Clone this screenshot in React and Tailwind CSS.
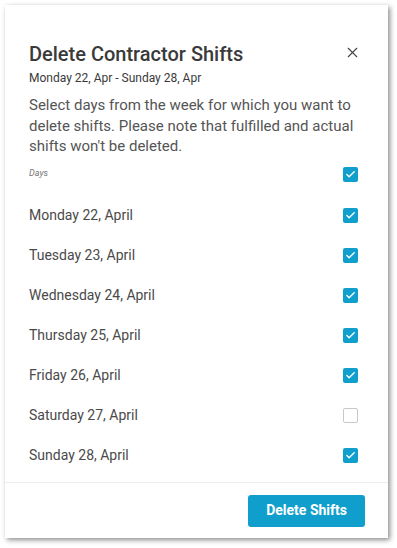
import { X, Check } from "lucide-react";

const days = [
  { label: "Monday 22, April", checked: true },
  { label: "Tuesday 23, April", checked: true },
  { label: "Wednesday 24, April", checked: true },
  { label: "Thursday 25, April", checked: true },
  { label: "Friday 26, April", checked: true },
  { label: "Saturday 27, April", checked: false },
  { label: "Sunday 28, April", checked: true },
];

function Box({ checked }) {
  return checked ? (
    <span className="flex h-[15px] w-[15px] items-center justify-center rounded-[2px] bg-[#109fcd]">
      <Check size={11} strokeWidth={3} className="text-white" />
    </span>
  ) : (
    <span className="h-[15px] w-[15px] rounded-[2px] border border-[#c8c8c8] bg-white" />
  );
}

export default function App() {
  return (
    <div className="min-h-screen bg-white pl-[5px] pt-[5px] font-['Roboto',sans-serif]">
      <div className="w-[383px] bg-white shadow-[2px_2px_5px_rgba(0,0,0,0.45)]">
        <div className="px-6 pt-[35px]">
          <div className="flex items-start justify-between">
            <h1 className="text-[20px] leading-[28px] font-medium text-[#3a3a3a]">
              Delete Contractor Shifts
            </h1>
            <button className="mr-[3px] mt-[4px] text-[#444]">
              <X size={17} strokeWidth={1.6} />
            </button>
          </div>
          <p className="mt-[1px] text-[12px] leading-[18px] text-[#3a3a3a]">
            Monday 22, Apr - Sunday 28, Apr
          </p>
          <p className="mt-[8px] text-[15px] leading-[20.5px] text-[#555]">
            Select days from the week for which you want to delete shifts. Please note
            that fulfilled and actual shifts won't be deleted.
          </p>
          <div className="mt-[10px] flex items-center justify-between pr-[6px]">
            <span className="text-[9px] italic text-[#777]">Days</span>
            <Box checked />
          </div>
          <div className="mt-[14px] pb-[6px]">
            {days.map((d) => (
              <div
                key={d.label}
                className="flex h-[40px] items-center justify-between pr-[6px]"
              >
                <span className="text-[14px] text-[#4a4a4a]">{d.label}</span>
                <Box checked={d.checked} />
              </div>
            ))}
          </div>
        </div>
        <div className="flex h-[56px] items-start justify-end border-t border-[#ececec] px-[23px] pt-[12px]">
          <button className="h-[32px] rounded-[3px] bg-[#109fcd] px-[18px] text-[14px] font-bold text-white">
            Delete Shifts
          </button>
        </div>
      </div>
    </div>
  );
}
